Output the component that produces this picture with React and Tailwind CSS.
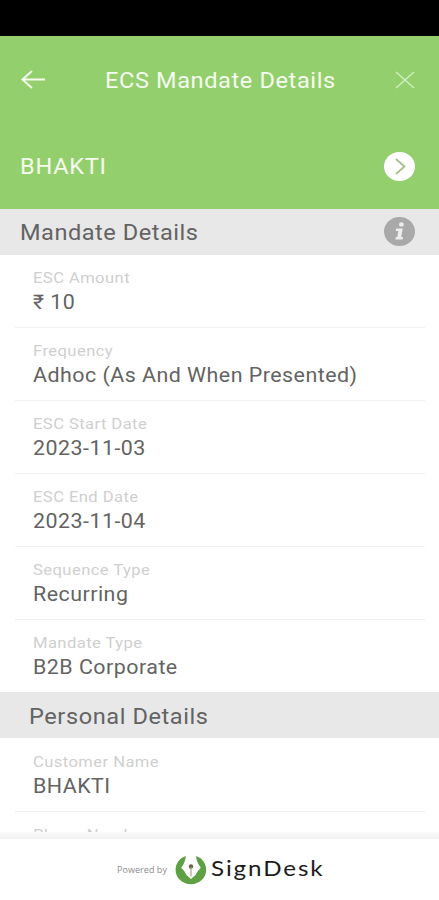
import clsx from 'clsx'

const MANDATE = [
  { label: 'ESC Amount',    value: '₹ 10' },
  { label: 'Frequency',     value: 'Adhoc (As And When Presented)' },
  { label: 'ESC Start Date', value: '2023-11-03' },
  { label: 'ESC End Date',  value: '2023-11-04' },
  { label: 'Sequence Type', value: 'Recurring' },
  { label: 'Mandate Type',  value: 'B2B Corporate' },
]

const PERSONAL = [
  { label: 'Customer Name', value: 'BHAKTI' },
  { label: 'Phone Number',  value: '' },
]

/* Slightly widened text, shared by every screen label */
function Wide({ className, children }) {
  return (
    <span className={clsx('block origin-left scale-x-[1.07] whitespace-nowrap', className)}>
      {children}
    </span>
  )
}

function Row({ label, value, last }) {
  return (
    <div className={clsx('shrink-0 pl-[15px] pr-[14px]', last ? 'h-[72px]' : 'h-[73px]')}>
      <div className={clsx('h-full pt-[13px] pl-[18px] border-b', last ? 'border-transparent' : 'border-[#f1f1f1]')}>
        <Wide className="text-[15.5px] leading-5 tracking-[0.4px] text-[#cfcfcf]">{label}</Wide>
        <Wide className="mt-0.5 text-[20px] leading-6 tracking-[0.45px] text-[#636363]">{value}</Wide>
      </div>
    </div>
  )
}

function InfoIcon() {
  return (
    <svg width="31" height="29" viewBox="0 0 31 29">
      <ellipse cx="15.5" cy="14.5" rx="15.5" ry="14.5" fill="#a9a9a9" />
      <ellipse cx="17.4" cy="7.4" rx="2.4" ry="2.2" fill="#ededed" />
      <path d="M12.2 11.4h6.600l-1.600 8.600h1.800l-.4 2.600h-7.200l.4-2.600h1.500l1-6h-2.500z" fill="#ededed" />
    </svg>
  )
}

function Logo() {
  return (
    <svg width="32" height="30" viewBox="0 0 32 30">
      <path
        d="M10.800 1C4.600 3 .6 8.400.6 15c0 8 6.700 14.200 15.300 14.200S31.200 23 31.200 15c0-6.600-4-12-10.200-14 .4 4.500 2 8.300 4.800 11.800-3 2.800-4.300 5.600-5.300 7.200L16 24l-4.500-4c-1-1.600-2.300-4.400-5.300-7.200C9 9.300 10.400 5.500 10.800 1z"
        fill="#5fa044"
      />
      <circle cx="16" cy="11.500" r="2.200" fill="#6d6147" />
      <path d="M16 12v9.500" stroke="#a9997f" strokeWidth="1.100" />
    </svg>
  )
}

export default function App() {
  return (
    <div className="flex h-[900px] w-[439px] flex-col overflow-hidden bg-white font-['Roboto',sans-serif]">
      {/* Status bar */}
      <div className="h-9 shrink-0 bg-black" />

      <header className="h-[173px] shrink-0 bg-[#94cf6e] text-[#f5fbef]">
        <div className="flex h-[88px] items-center pl-[21px] pr-[24px]">
          <svg width="25" height="20" viewBox="0 0 25 20" fill="none" stroke="currentColor" strokeWidth="1.9">
            <path d="M24 9.500H1.500M11 1L1.500 9.500l9.500 8.500" />
          </svg>
          <h1 className="ml-[58.5px] flex-1 pt-px">
            <Wide className="text-[22px] leading-7 tracking-[0.58px]">ECS Mandate Details</Wide>
          </h1>
          <svg width="20" height="18" viewBox="0 0 20 18" fill="none" stroke="#d0edbd" strokeWidth="1.5">
            <path d="M1 1l18 16M19 1L1 17" />
          </svg>
        </div>
        <div className="flex h-[85px] items-center justify-between pl-[20px] pr-[24px]">
          <Wide className="pt-px text-[22px] leading-7 tracking-[0.7px]">BHAKTI</Wide>
          <svg width="31" height="29" viewBox="0 0 31 29" fill="none">
            <ellipse cx="15.500" cy="14.500" rx="15.500" ry="14.500" fill="#fff" />
            <path d="M12 7l8.500 7.500L12 22" stroke="#a3bd8a" strokeWidth="1.700" />
          </svg>
        </div>
      </header>

      <main className="flex min-h-0 flex-1 flex-col overflow-hidden">
        <div className="flex h-[46px] shrink-0 items-center justify-between bg-[#e8e8e8] pl-[19.5px] pr-[24px] text-[#636363]">
          <Wide className="pt-px text-[22px] leading-7 tracking-[0.5px]">Mandate Details</Wide>
          <div className="pb-px">
            <InfoIcon />
          </div>
        </div>
        {MANDATE.map((item, i) => (
          <Row key={item.label} {...item} last={i === MANDATE.length - 1} />
        ))}
        <div className="flex h-[46px] shrink-0 items-center bg-[#e8e8e8] pl-[28.5px] text-[#636363]">
          <Wide className="pt-[3px] text-[22px] leading-7 tracking-[0.55px]">Personal Details</Wide>
        </div>
        <div className="shrink-0 pt-px">
          {PERSONAL.map((item) => (
            <Row key={item.label} {...item} />
          ))}
        </div>
      </main>

      {/* Footer */}
      <div className="h-[7px] shrink-0 bg-linear-to-b from-[#fcfcfc] to-[#f0f0f0]" />
      <footer className="flex h-[61px] shrink-0 items-center bg-white pl-[117px]">
        <span className="w-[58px] text-[9px] tracking-[0.05px] whitespace-nowrap text-[#8c8c8c] font-['Open_Sans',sans-serif]">
          Powered by
        </span>
        <Logo />
        <span className="ml-[4px] block origin-left scale-x-[1.1] pb-[3px] text-[22px] leading-7 tracking-[1.7px] text-[#1c1c1c] font-['Lato',sans-serif]">
          SignDesk
        </span>
      </footer>
    </div>
  )
}
